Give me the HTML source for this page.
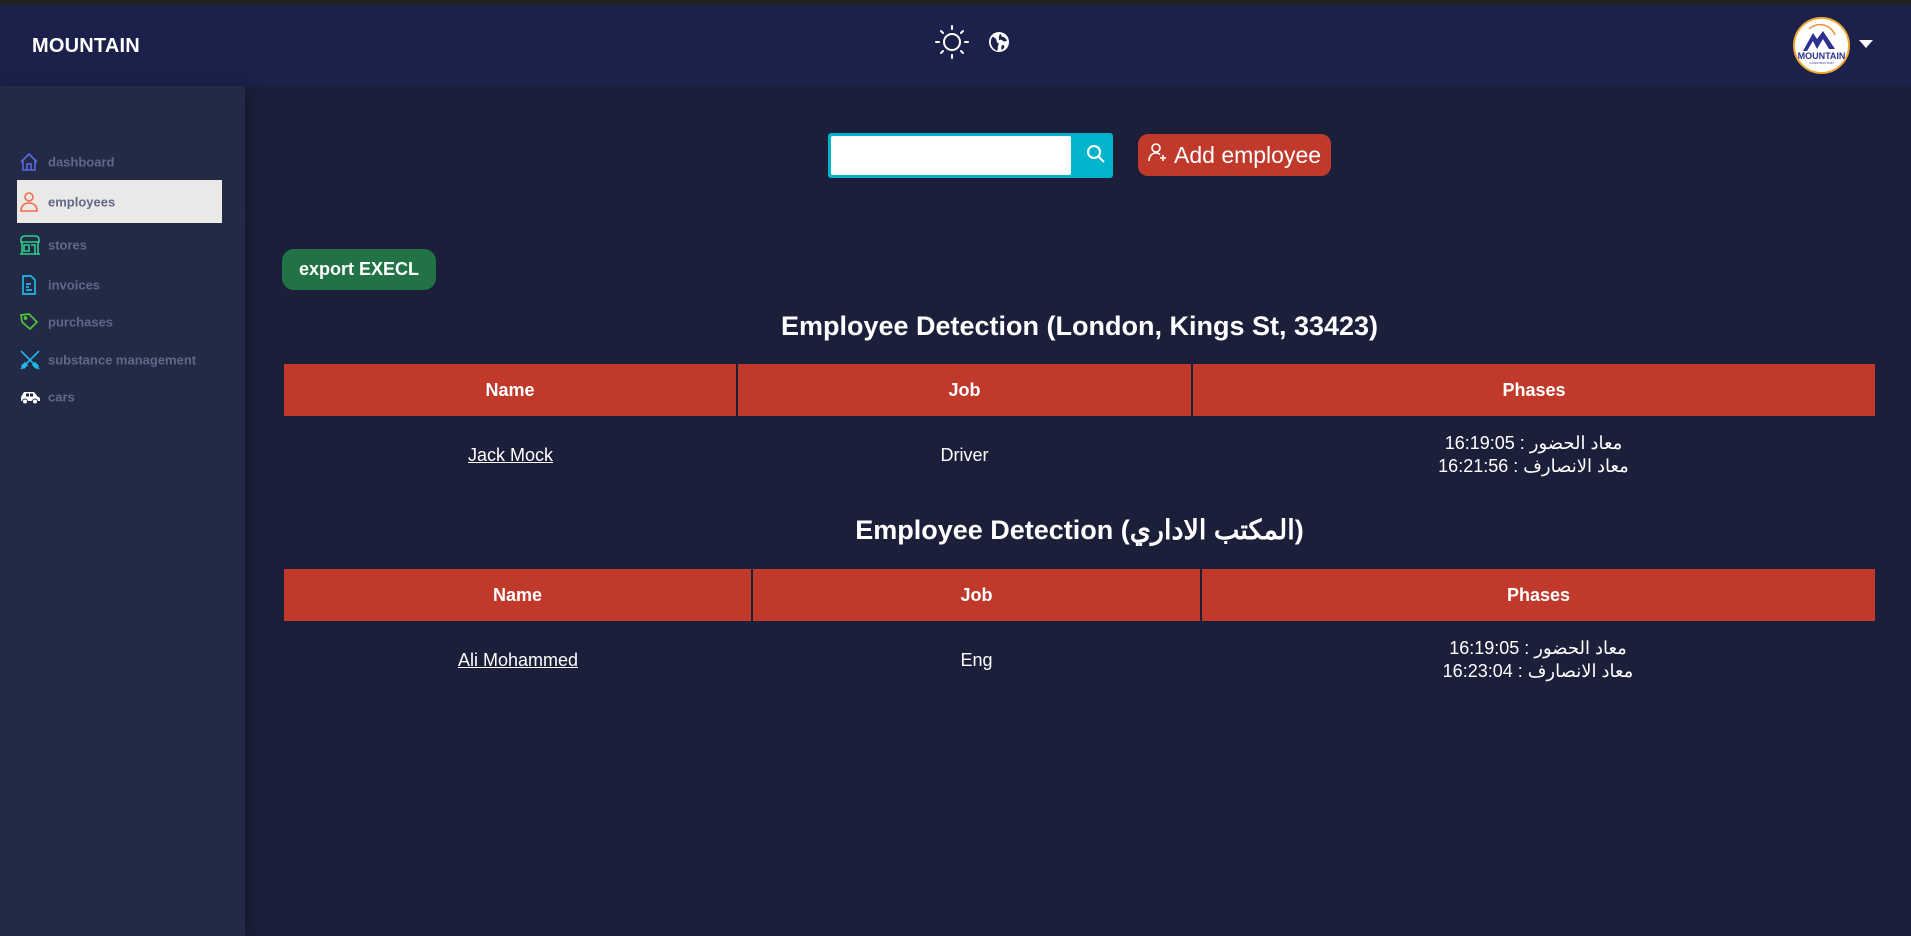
<!DOCTYPE html>
<html><head><meta charset="utf-8">
<style>
*{margin:0;padding:0;box-sizing:border-box}
html,body{width:1911px;height:936px;overflow:hidden;background:#1b1f3a;font-family:"Liberation Sans",Roboto,sans-serif;color:#fff}
.topstrip{position:absolute;left:0;top:0;width:1911px;height:5px;background:#202124}
.header{position:absolute;left:0;top:5px;width:1911px;height:81px;background:#1b214a}
.brand{position:absolute;left:32px;top:30px;font-size:20px;font-weight:bold;letter-spacing:0.2px}
.sidebar{position:absolute;left:0;top:86px;width:245px;height:850px;background:#232a46;box-shadow:4px 0 14px rgba(0,0,0,.25)}
.item{position:absolute;left:17px;width:205px;height:43px}
.item .ic{position:absolute;left:2px;top:50%;transform:translateY(-50%)}
.item span{position:absolute;left:31px;top:50%;transform:translateY(-50%);font-size:13px;font-weight:bold;color:#5e6888}
.item.active{background:#ebe9e7}
.search{position:absolute;left:828px;top:133px;width:285px;height:45px;background:#00b4cc;border-radius:3px}
.search .in{position:absolute;left:3px;top:3px;width:240px;height:39px;background:#fff;border-radius:2px}
.addbtn{position:absolute;left:1138px;top:134px;width:193px;height:42px;background:#c0392b;border-radius:10px;font-size:23px;line-height:42px;padding-left:36px}
.export{position:absolute;left:282px;top:249px;width:154px;height:41px;background:#217346;border-radius:12px;font-size:18px;font-weight:bold;line-height:41px;text-align:center}
h2{position:absolute;left:284px;width:1591px;text-align:center;font-size:27px;font-weight:bold;font-family:"Liberation Sans","Noto Sans CJK SC",sans-serif}
table{position:absolute;left:284px;width:1591px;border-collapse:collapse}
th{background:#c0392b;height:52px;font-size:18px;font-weight:bold;border-left:2px solid #1b1f3a}
th:first-child{border-left:none}
td{text-align:center;font-size:18px;height:78px;font-family:"Liberation Sans","Noto Sans CJK SC",sans-serif;line-height:23px}
td a{color:#fff;text-decoration:underline}
</style></head><body>
<div class="topstrip"></div>
<div class="header">
  <div class="brand">MOUNTAIN</div>
  <svg style="position:absolute;left:934px;top:19px" width="36" height="36" viewBox="0 0 36 36" fill="none" stroke="#fff" stroke-width="2" stroke-linecap="round">
    <circle cx="18" cy="18" r="8"/>
    <line x1="18" y1="2" x2="18" y2="5"/><line x1="18" y1="31" x2="18" y2="34"/>
    <line x1="2" y1="18" x2="5" y2="18"/><line x1="31" y1="18" x2="34" y2="18"/>
    <line x1="7" y1="7" x2="9" y2="9"/><line x1="27" y1="27" x2="29" y2="29"/>
    <line x1="29" y1="7" x2="27" y2="9"/><line x1="7" y1="29" x2="9" y2="27"/>
  </svg>
  <svg style="position:absolute;left:988px;top:26px" width="22" height="22" viewBox="0 0 22 22">
    <circle cx="11" cy="11" r="10" fill="#fff"/>
    <path d="M4 6c2 0 3 1 4 2s0 3 2 4-1 3 0 5l-1 3C5 18 2 14 3 9z" fill="#1b214a"/>
    <path d="M12 3c2 1 1 3 3 3s3 2 4 4c-2 0-3 1-4 0s-2-2-3-1-2-2 0-6z" fill="#1b214a"/>
    <path d="M14 14c2 0 3 1 2 3l-2 2c-1-1-1-3 0-5z" fill="#1b214a"/>
  </svg>
  <div style="position:absolute;left:1793px;top:12px;width:57px;height:57px;border-radius:50%;background:#fff;border:2px solid #f0a830;overflow:hidden">
    <svg width="53" height="53" viewBox="0 0 53 53" style="position:absolute;left:0;top:0">
      <path d="M14 10 a16 16 0 0 1 26 6" fill="none" stroke="#f0903a" stroke-width="1.5"/>
      <path d="M8 32 L18 14 L22 20 L28 12 L40 30 L34 30 L28 20 L22 30 L18 22 L12 32z" fill="#2e3192"/>
      <text x="26.5" y="40" font-size="9" font-weight="bold" fill="#2e3192" text-anchor="middle" font-family="Liberation Sans">MOUNTAIN</text>
      <text x="26.5" y="45" font-size="3" fill="#2e3192" text-anchor="middle" font-family="Liberation Sans">CONSTRUCTION</text>
    </svg>
  </div>
  <div style="position:absolute;left:1859px;top:35px;width:0;height:0;border-left:7px solid transparent;border-right:7px solid transparent;border-top:8px solid #fff"></div>
</div>

<div class="sidebar">
  <div class="item" style="top:54px">
    <svg class="ic" width="20" height="20" viewBox="0 0 20 20" fill="none" stroke="#5a6ae0" stroke-width="1.6"><path d="M2 10 L10 2 L18 10 M4 8 V18 H16 V8 M8 18 V12 H12 V18"/></svg>
    <span>dashboard</span></div>
  <div class="item active" style="top:94px">
    <svg class="ic" width="20" height="22" viewBox="0 0 20 22" fill="none" stroke="#f26b4a" stroke-width="1.6"><circle cx="10" cy="6" r="4"/><path d="M2 20c0-5 3-8 8-8s8 3 8 8z"/></svg>
    <span>employees</span></div>
  <div class="item" style="top:137px">
    <svg class="ic" width="22" height="22" viewBox="0 0 22 22" fill="none" stroke="#2ecc8a" stroke-width="1.6"><path d="M2 6 Q2 2 6 2 H16 Q20 2 20 6 V8 H2z M3 8 V20 H19 V8 M1 20 H21 M5 11 H10 V17 H5z M12 11 H16 V20"/></svg>
    <span>stores</span></div>
  <div class="item" style="top:177px">
    <svg class="ic" width="20" height="20" viewBox="0 0 20 20" fill="none" stroke="#1fb8e6" stroke-width="1.7"><path d="M4 1 H12 L16 5 V19 H4z M7 9 H12 M7 12 H10 M7 15 H13"/></svg>
    <span>invoices</span></div>
  <div class="item" style="top:214px">
    <svg class="ic" width="20" height="20" viewBox="0 0 20 20" fill="none" stroke="#4cc83a" stroke-width="1.7"><path d="M2 3 L10 2 L18 10 L11 17 L3 10z"/><circle cx="6.5" cy="6" r="1"/></svg>
    <span>purchases</span></div>
  <div class="item" style="top:252px">
    <svg class="ic" width="22" height="22" viewBox="0 0 22 22" fill="none" stroke="#1fb8e6" stroke-width="1.6"><path d="M2 2 L20 20 M20 2 L2 20"/><path d="M3 17 l3-3 2 2-3 3z M19 17 l-3-3-2 2 3 3z" fill="#1fb8e6"/></svg>
    <span>substance management</span></div>
  <div class="item" style="top:289px">
    <svg class="ic" width="22" height="16" viewBox="0 0 22 16"><path d="M2 12 V8 L5 3 H15 L19 8 Q21 8 21 10 V12z" fill="#fff"/><rect x="7" y="4.5" width="3" height="3" fill="#232a46"/><rect x="11" y="4.5" width="3" height="3" fill="#232a46"/><circle cx="6" cy="12.5" r="2.5" fill="#fff" stroke="#232a46"/><circle cx="16" cy="12.5" r="2.5" fill="#fff" stroke="#232a46"/></svg>
    <span>cars</span></div>
</div>

<div style="position:absolute;left:245px;top:215px;width:1616px;height:2px;background:#1a1e36"></div>

<div class="search"><div class="in"></div>
  <svg style="position:absolute;left:257px;top:10px" width="22" height="22" viewBox="0 0 22 22" fill="none" stroke="#fff" stroke-width="2"><circle cx="9" cy="9" r="6"/><path d="M13.5 13.5 L19 19"/></svg>
</div>
<div class="addbtn">
  <svg style="position:absolute;left:9px;top:8px" width="22" height="22" viewBox="0 0 22 22" fill="none" stroke="#fff" stroke-width="1.6"><circle cx="9" cy="6" r="4"/><path d="M2 19c0-5 3-8 7-8 2 0 3 .5 4 1.5"/><path d="M16 13v6M13 16h6"/></svg>
  Add employee</div>

<div class="export">export EXECL</div>

<h2 style="top:311px">Employee Detection (London, Kings St, 33423)</h2>
<table style="top:364px">
  <tr><th style="width:453px">Name</th><th style="width:455px">Job</th><th>Phases</th></tr>
  <tr><td><a>Jack Mock</a></td><td>Driver</td><td>معاد الحضور : 16:19:05<br>معاد الانصارف : 16:21:56</td></tr>
</table>

<h2 style="top:515px">Employee Detection (المكتب الاداري)</h2>
<table style="top:569px">
  <tr><th style="width:468px">Name</th><th style="width:449px">Job</th><th>Phases</th></tr>
  <tr><td><a>Ali Mohammed</a></td><td>Eng</td><td>معاد الحضور : 16:19:05<br>معاد الانصارف : 16:23:04</td></tr>
</table>
</body></html>
